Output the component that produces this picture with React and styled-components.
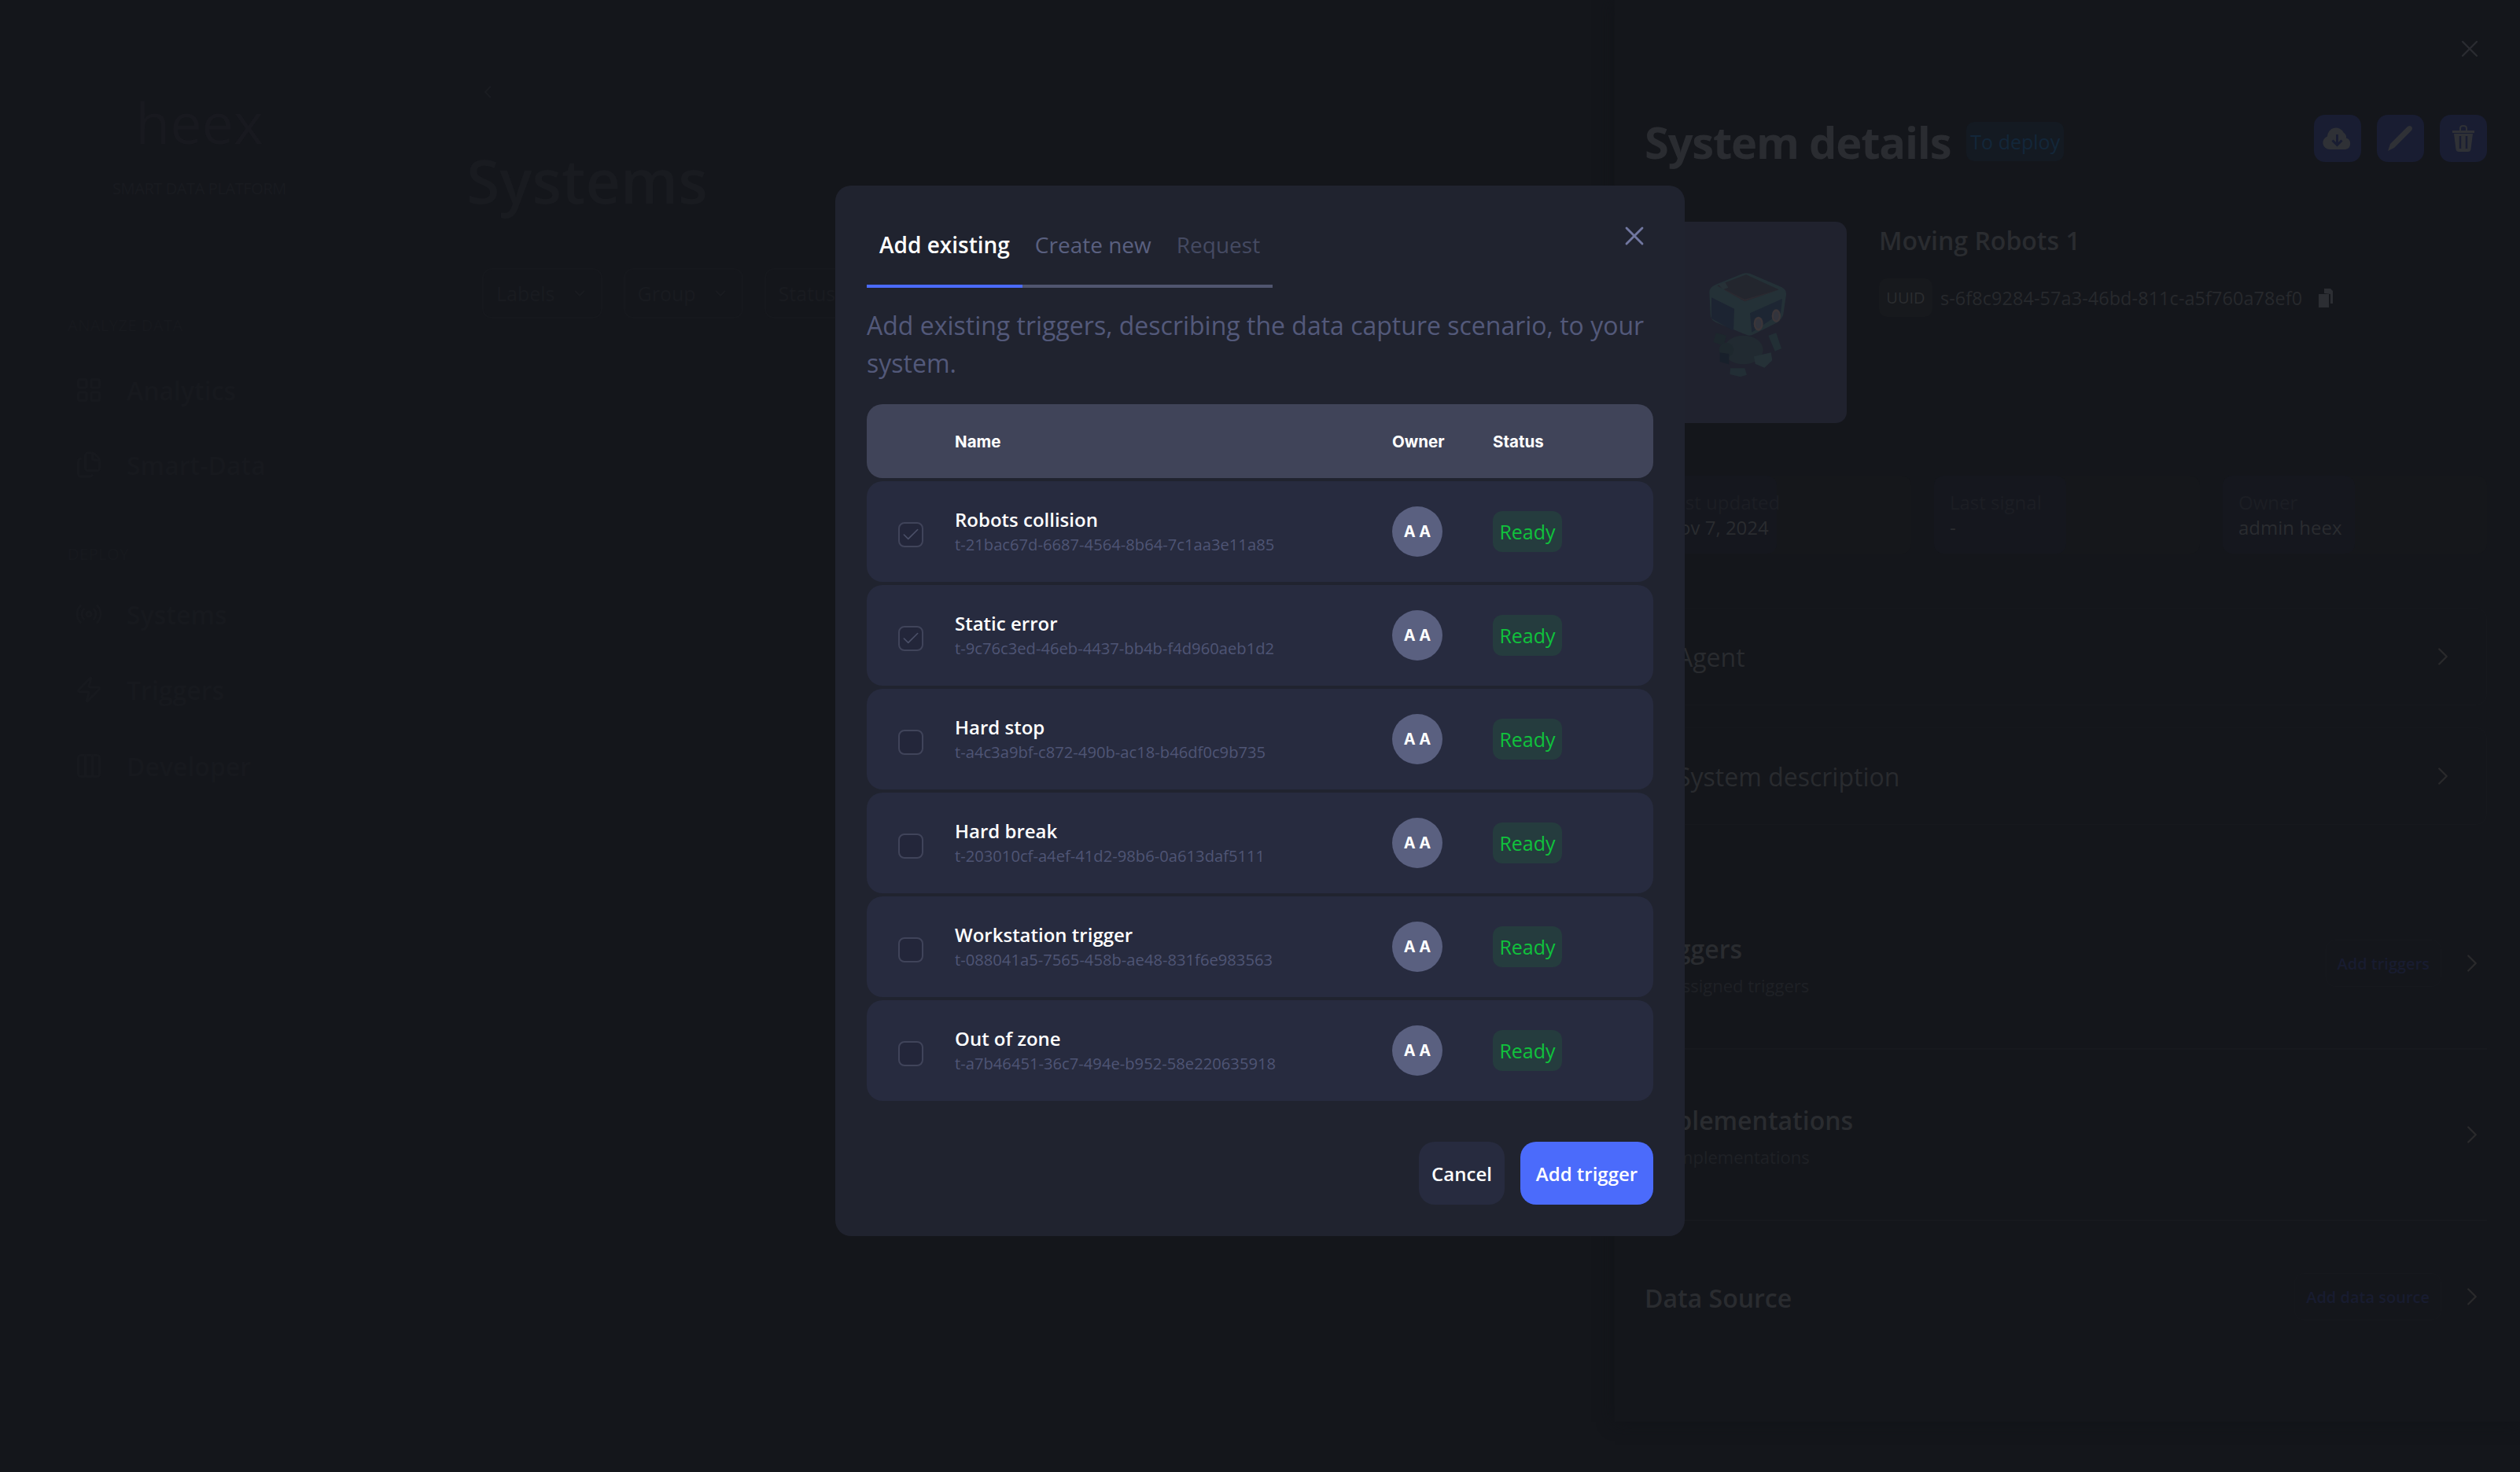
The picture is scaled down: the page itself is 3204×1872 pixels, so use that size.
import React from "react";
import styled, { createGlobalStyle } from "styled-components";
import { X, ChevronRight, ChevronLeft, ChevronDown, Check, LayoutGrid, Files, Radio, Zap, Columns3 } from "lucide-react";

const Global = createGlobalStyle`
  html, body { margin: 0; padding: 0; background: #13151a; }
  body { font-family: "Open Sans", "Liberation Sans", sans-serif; }
  * { box-sizing: border-box; }
`;

const Page = styled.div`
  position: relative; display: flex; width: 3204px; height: 1872px; overflow: hidden; background: #14161b;
`;

/* ---------- dimmed sidebar ---------- */
const Sidebar = styled.aside`
  width: 570px; flex: none; padding: 105px 0 0 86px; display: flex; flex-direction: column;
`;
const Logo = styled.div`
  margin-left: 86px; font-size: 72px; line-height: 100px; font-weight: 500; color: #18191f; letter-spacing: 0;
`;
const Tagline = styled.div`
  margin: 21px 0 0 57px; font-size: 20px; line-height: 28px; color: #191b20; white-space: nowrap; letter-spacing: -.4px;
`;
const NavLabel = styled.div`
  margin-top: ${p => p.$mt}px; font-size: 20px; line-height: 26px; color: #17191e; letter-spacing: .5px;
`;
const NavItem = styled.div`
  margin-top: ${p => p.$mt}px; height: 40px; display: flex; align-items: center; gap: 30px; margin-left: 9px;
  font-size: 32px; font-weight: 600; color: #17191e;
  svg { width: 36px; height: 36px; color: #17191e; flex: none; }
`;

/* ---------- dimmed list ---------- */
const Main = styled.main`
  flex: 1; padding: 100px 0 0 23px; display: flex; flex-direction: column;
  min-width: 0;
`;
const Back = styled.div`
  height: 34px; color: #1a1c21; display: flex; align-items: center; margin-left: 14px;
  svg { width: 26px; height: 26px; }
`;
const PageTitle = styled.h1`
  margin: 48px 0 0; font-size: 77px; line-height: 96px; font-weight: 600; color: #191b20;
`;
const Filters = styled.div`
  margin: 63px 0 0 20px; display: flex; gap: 27px;
`;
const Filter = styled.div`
  height: 64px; padding: 0 16px; display: flex; align-items: center; gap: 20px; font-size: 25px; color: #191b20;
  border: 2px solid #16181d; border-radius: 12px;
  svg { width: 22px; height: 22px; }
`;

/* ---------- dimmed details panel ---------- */
const Panel = styled.section`
  width: 1151px; flex: none; height: 1808px; padding: 44px 42px 0 38px; background: #14161b; display: flex; flex-direction: column;
  box-shadow: 0 0 20px #111318;
`;
const PanelClose = styled.div`
  height: 36px; display: flex; justify-content: flex-end; padding-right: 4px; color: #2a2c31;
  svg { width: 36px; height: 36px; stroke-width: 1.6; }
`;
const PanelHeader = styled.div`
  margin-top: 66px; height: 60px; display: flex; justify-content: space-between;
`;
const TitleGroup = styled.div`
  display: flex; align-items: center; gap: 20px; padding-top: 8px;
`;
const PanelTitle = styled.h2`
  margin: 0; font-size: 56px; line-height: 72px; font-weight: 700; color: #2a2c31; letter-spacing: -1.2px;
`;
const Tag = styled.span`
  height: 50px; padding: 0 5px; border-radius: 10px; background: #141a22; color: #13273a; font-size: 25px; line-height: 50px;
`;
const Actions = styled.div`
  display: flex; gap: 20px;
`;
const IconButton = styled.div`
  width: 60px; height: 60px; border-radius: 14px; background: #191d32; color: #2f3136; display: flex; align-items: center; justify-content: center;
`;
const Hero = styled.div`
  margin-top: 76px; display: flex; gap: 41px;
`;
const RobotCard = styled.div`
  width: 257px; height: 256px; border-radius: 14px; background: #20222e; display: flex; align-items: center; justify-content: center; flex: none;
  svg { opacity: .65; }
`;
const HeroText = styled.div`
  padding-top: 4px; display: flex; flex-direction: column;
`;
const HeroName = styled.div`
  font-size: 32px; line-height: 40px; font-weight: 600; color: #2a2c30;
`;
const UuidRow = styled.div`
  margin-top: 28px; display: flex; align-items: center; gap: 10px; font-size: 23.4px; color: #27292d; letter-spacing: .1px;
  svg { color: #2c2e33; margin-left: 10px; }
`;
const UuidChip = styled.span`
  width: 68px; height: 49px; border-radius: 10px; background: #17191d; display: flex; align-items: center; justify-content: center; font-size: 20px; color: #2b2d30; font-weight: 500; letter-spacing: 0;
`;
const Stats = styled.div`
  margin-top: 67px; display: grid; grid-template-columns: 339px 338px 336px; gap: 29px;
`;
const Stat = styled.div`
  height: 99px; border-radius: 12px; background: #15171b;
`;
const StatInner = styled.div`
  width: 168px; height: 99px; background: #15171e; border-radius: 12px; padding: 18px 0 0 ${p => p.$pl || 20}px; white-space: nowrap;
`;
const StatLabel = styled.div`
  font-size: 24px; line-height: 32px; color: #1c1e24;
`;
const StatValue = styled.div`
  font-size: 24px; line-height: 32px; color: #2a2c30;
`;
const Accordion = styled.div`
  margin-top: ${p => p.$mt}px; height: 124px; padding: 0 36px 0 40px; display: flex; align-items: center; justify-content: space-between;
  border: 1px solid #16181d; border-radius: 14px; font-size: 32px; color: #292b2f;
  svg { width: 38px; height: 38px; color: #2a2a2c; stroke-width: 1.5; }
`;
const Section = styled.div`
  height: ${p => p.$h}px; display: flex; justify-content: space-between; padding-top: ${p => p.$pt}px;
  border-bottom: ${p => p.$last ? "none" : "2px solid #17191e"};
`;
const SectionHead = styled.div`
  font-size: 32px; line-height: 32px; font-weight: 600; color: #2a2c30;
`;
const SectionSub = styled.div`
  margin-top: 14px; font-size: 22px; line-height: 32px; color: #1f2126;
`;
const SectionSide = styled.div`
  display: flex; align-items: center; height: 60px; margin-top: ${p => p.$mt}px; gap: 34px;
  svg { width: 38px; height: 38px; color: #2a2a2c; stroke-width: 1.5; }
`;
const SideLink = styled.span`
  height: 60px; margin-right: -14px; padding: 0 14px; display: flex; align-items: center; border: 1px solid #16181d; border-radius: 12px;
  font-size: 20px; font-weight: 600; color: #181c30;
`;

/* ---------- modal ---------- */
const Overlay = styled.div`
  position: absolute; inset: 0; display: flex; justify-content: center; align-items: flex-start; padding-top: 236px;
`;
const Modal = styled.div`
  position: relative; width: 1080px; height: 1336px; padding: 40px; border-radius: 20px; background: #20232f;
`;
const CloseButton = styled.div`
  position: absolute; top: 44px; right: 44px; width: 40px; height: 40px; color: #7177a0; display: flex; align-items: center; justify-content: center;
  svg { width: 40px; height: 40px; stroke-width: 1.7; }
`;
const TabBar = styled.div`
  display: flex; width: fit-content;
`;
const Tab = styled.div`
  padding: 19px 16px 35px; font-size: 28px; line-height: 32px; white-space: nowrap;
  font-weight: ${p => p.$active ? 600 : 400};
  color: ${p => p.$active ? "#ffffff" : p.$muted ? "#454a62" : "#5a6080"};
  border-bottom: 4px solid ${p => p.$active ? "#4b6bfb" : "#50556f"};
`;
const Description = styled.p`
  margin: 24px 0 0; font-size: 32px; line-height: 48px; color: #53597a;
`;
const TableHead = styled.div`
  margin-top: 28px; height: 94px; border-radius: 20px; background: #404459;
  display: grid; grid-template-columns: 112px 556px 128px 1fr; align-items: center;
  font-family: Inter, "Liberation Sans", sans-serif; font-size: 20.5px; font-weight: 700; color: #ffffff;
`;
const Rows = styled.div`
  margin-top: 4px; display: flex; flex-direction: column; gap: 4px;
`;
const Row = styled.div`
  height: 128px; border-radius: 20px; background: #272b3f;
  display: grid; grid-template-columns: 112px 556px 128px 1fr; align-items: center;
`;
const CheckBox = styled.div`
  width: 32px; height: 32px; margin: 8px 0 0 40px; border: 2px solid #40445a; border-radius: 8px; background: #23263a; display: flex; align-items: center; justify-content: center; color: #4b5068;
  svg { width: 26px; height: 26px; stroke-width: 1.5; }
`;
const NameCell = styled.div`
  display: flex; flex-direction: column;
`;
const RowName = styled.div`
  font-size: 24px; line-height: 34px; font-weight: 600; color: #ffffff;
`;
const RowId = styled.div`
  margin-top: -2px; font-size: 20.2px; line-height: 32px; font-weight: 500; color: #4f5575;
`;
const Avatar = styled.div`
  width: 64px; height: 64px; border-radius: 50%; background: #5a6080; display: flex; align-items: center; justify-content: center;
  font-family: Inter, "Liberation Sans", sans-serif; font-size: 20px; font-weight: 700; color: #ffffff;
`;
const Status = styled.div`
  width: 88px; height: 52px; border-radius: 12px; background: #253c3e; color: #10c23c; font-size: 25px; display: flex; align-items: center; justify-content: center;
`;
const Footer = styled.div`
  margin-top: 52px; display: flex; justify-content: flex-end; gap: 20px;
`;
const Button = styled.div`
  height: 80px; width: ${p => p.$primary ? 169 : 109}px; border-radius: 20px; display: flex; align-items: center; justify-content: center;
  font-size: 24px; font-weight: 600; color: #ffffff; background: ${p => p.$primary ? "#4b6bfb" : "#272b3f"};
`;

const triggers = [
  ["Robots collision", "t-21bac67d-6687-4564-8b64-7c1aa3e11a85", true],
  ["Static error", "t-9c76c3ed-46eb-4437-bb4b-f4d960aeb1d2", true],
  ["Hard stop", "t-a4c3a9bf-c872-490b-ac18-b46df0c9b735", false],
  ["Hard break", "t-203010cf-a4ef-41d2-98b6-0a613daf5111", false],
  ["Workstation trigger", "t-088041a5-7565-458b-ae48-831f6e983563", false],
  ["Out of zone", "t-a7b46451-36c7-494e-b952-58e220635918", false],
];

const Robot = () => (
  <svg width="160" height="160" viewBox="0 0 480 480">
    <ellipse cx="230" cy="345" rx="75" ry="55" fill="#222f33" />
    <path d="M125 280l40 10-10 40-40-15z" fill="#1c2a2d" />
    <path d="M325 290l30-10 20 60-25 10z" fill="#24363a" />
    <circle cx="165" cy="345" r="28" fill="#1e2c2f" />
    <path d="M140 355l35 5 0 40-35-10z" fill="#15202a" />
    <path d="M180 415l55 0 8 25-25 8-40-10z" fill="#243539" />
    <path d="M270 370l65-15 5 30-30 28-35-15z" fill="#28393d" />
    <path d="M100 125Q100 105 125 95L225 55Q245 48 265 58L375 105Q395 115 393 135L382 210Q378 225 360 240L270 285Q255 295 235 285L125 240Q105 232 104 210z" fill="#27393d" />
    <path d="M130 100L240 58L365 115L235 160z" fill="#26292e" />
    <path d="M130 100L235 160L365 115L235 152z" fill="#332f33" />
    <path d="M135 95l25-8 12 20-20 8z" fill="#2c3a3d" />
    <path d="M108 145L195 188L192 272L108 225z" fill="#1b2635" />
    <path d="M255 205L378 150L372 205L262 278z" fill="#1c2936" />
    <ellipse cx="287" cy="245" rx="18" ry="27" fill="#4a4140" />
    <ellipse cx="287" cy="245" rx="11" ry="18" fill="#3c3e46" />
    <ellipse cx="355" cy="215" rx="17" ry="25" fill="#4a4140" />
    <ellipse cx="355" cy="215" rx="10" ry="17" fill="#3c3e46" />
  </svg>
);

const CloudIcon = () => (
  <svg width="38" height="30" viewBox="0 0 38 30">
    <path d="M9 29A8.5 8.5 0 0 1 6 12.5 11 11 0 0 1 27 8a6.5 6.5 0 0 1 3 6.5 7.5 7.5 0 0 1-1 14.5z" fill="currentColor" />
    <path d="M18.5 10v13M12.5 17.5l6 6 6-6" fill="none" stroke="#191d32" strokeWidth="3" />
  </svg>
);
const PencilIcon = () => (
  <svg width="34" height="34" viewBox="0 0 34 34">
    <path d="M26 2q3-2 5 0t0 5L9 29 1 33l3-9z" fill="currentColor" />
  </svg>
);
const TrashIcon = () => (
  <svg width="30" height="36" viewBox="0 0 30 36">
    <path d="M1 8h28v3H1zM10 8V5q0-4 5-4t5 4v3h-2V5q0-2-3-2t-3 2v3z" fill="currentColor" />
    <path d="M3 12h24l-2.500 20q-.4 3-3.500 3H9q-3 0-3.500-3z" fill="currentColor" />
    <path d="M11 15v16M19 15v16" stroke="#191d32" strokeWidth="2.500" />
  </svg>
);
const CopyIcon = () => (
  <svg width="20" height="26" viewBox="0 0 20 26">
    <path d="M8 1l8 0 3 3v16H16V8L8 7z" fill="currentColor" />
    <path d="M1 8h13v17H1z" fill="currentColor" />
  </svg>
);

export default function App() {
  return (
    <Page>
      <Global />
      <Sidebar>
        <Logo>heex</Logo>
        <Tagline>SMART DATA PLATFORM</Tagline>
        <NavLabel $mt={147}>ANALYZE DATA</NavLabel>
        <NavItem $mt={49}><LayoutGrid />Analytics</NavItem>
        <NavItem $mt={55}><Files />Smart-Data</NavItem>
        <NavLabel $mt={81}>DEPLOY</NavLabel>
        <NavItem $mt={43}><Radio />Systems</NavItem>
        <NavItem $mt={56}><Zap />Triggers</NavItem>
        <NavItem $mt={57}><Columns3 />Developer</NavItem>
      </Sidebar>
      <Main>
        <Back><ChevronLeft /></Back>
        <PageTitle>Systems</PageTitle>
        <Filters>
          <Filter>Labels<ChevronDown /></Filter>
          <Filter>Group<ChevronDown /></Filter>
          <Filter>Status<ChevronDown /></Filter>
        </Filters>
      </Main>
      <Panel>
        <PanelClose><X /></PanelClose>
        <PanelHeader>
          <TitleGroup>
            <PanelTitle>System details</PanelTitle>
            <Tag>To deploy</Tag>
          </TitleGroup>
          <Actions>
            <IconButton><CloudIcon /></IconButton>
            <IconButton><PencilIcon /></IconButton>
            <IconButton><TrashIcon /></IconButton>
          </Actions>
        </PanelHeader>
        <Hero>
          <RobotCard><Robot /></RobotCard>
          <HeroText>
            <HeroName>Moving Robots 1</HeroName>
            <UuidRow>
              <UuidChip>UUID</UuidChip>
              s-6f8c9284-57a3-46bd-811c-a5f760a78ef0
              <CopyIcon />
            </UuidRow>
          </HeroText>
        </Hero>
        <Stats>
          <Stat><StatInner $pl={26}><StatLabel>Last updated</StatLabel><StatValue>Nov 7, 2024</StatValue></StatInner></Stat>
          <Stat><StatInner><StatLabel>Last signal</StatLabel><StatValue>-</StatValue></StatInner></Stat>
          <Stat><StatInner><StatLabel>Owner</StatLabel><StatValue>admin heex</StatValue></StatInner></Stat>
        </Stats>
        <Accordion $mt={69}>Agent<ChevronRight /></Accordion>
        <Accordion $mt={28}>System description<ChevronRight /></Accordion>
        <Section $h={286} $pt={142}>
          <div><SectionHead>Triggers</SectionHead><SectionSub>No assigned triggers</SectionSub></div>
          <SectionSide $mt={4}><SideLink>Add triggers</SideLink><ChevronRight /></SectionSide>
        </Section>
        <Section $h={218} $pt={74}>
          <div><SectionHead>Implementations</SectionHead><SectionSub>No implementations</SectionSub></div>
          <SectionSide $mt={4}><ChevronRight /></SectionSide>
        </Section>
        <Section $last $h={200} $pt={82}>
          <SectionHead>Data Source</SectionHead>
          <SectionSide $mt={-16}><SideLink>Add data source</SideLink><ChevronRight /></SectionSide>
        </Section>
      </Panel>
      <Overlay>
        <Modal>
          <CloseButton><X /></CloseButton>
          <TabBar>
            <Tab $active>Add existing</Tab>
            <Tab>Create new</Tab>
            <Tab $muted>Request</Tab>
          </TabBar>
          <Description>Add existing triggers, describing the data capture scenario, to your system.</Description>
          <TableHead>
            <span />
            <span>Name</span>
            <span>Owner</span>
            <span>Status</span>
          </TableHead>
          <Rows>
            {triggers.map(([name, id, checked]) => (
              <Row key={id}>
                <CheckBox>{checked && <Check />}</CheckBox>
                <NameCell><RowName>{name}</RowName><RowId>{id}</RowId></NameCell>
                <Avatar>A A</Avatar>
                <Status>Ready</Status>
              </Row>
            ))}
          </Rows>
          <Footer>
            <Button>Cancel</Button>
            <Button $primary>Add trigger</Button>
          </Footer>
        </Modal>
      </Overlay>
    </Page>
  );
}
